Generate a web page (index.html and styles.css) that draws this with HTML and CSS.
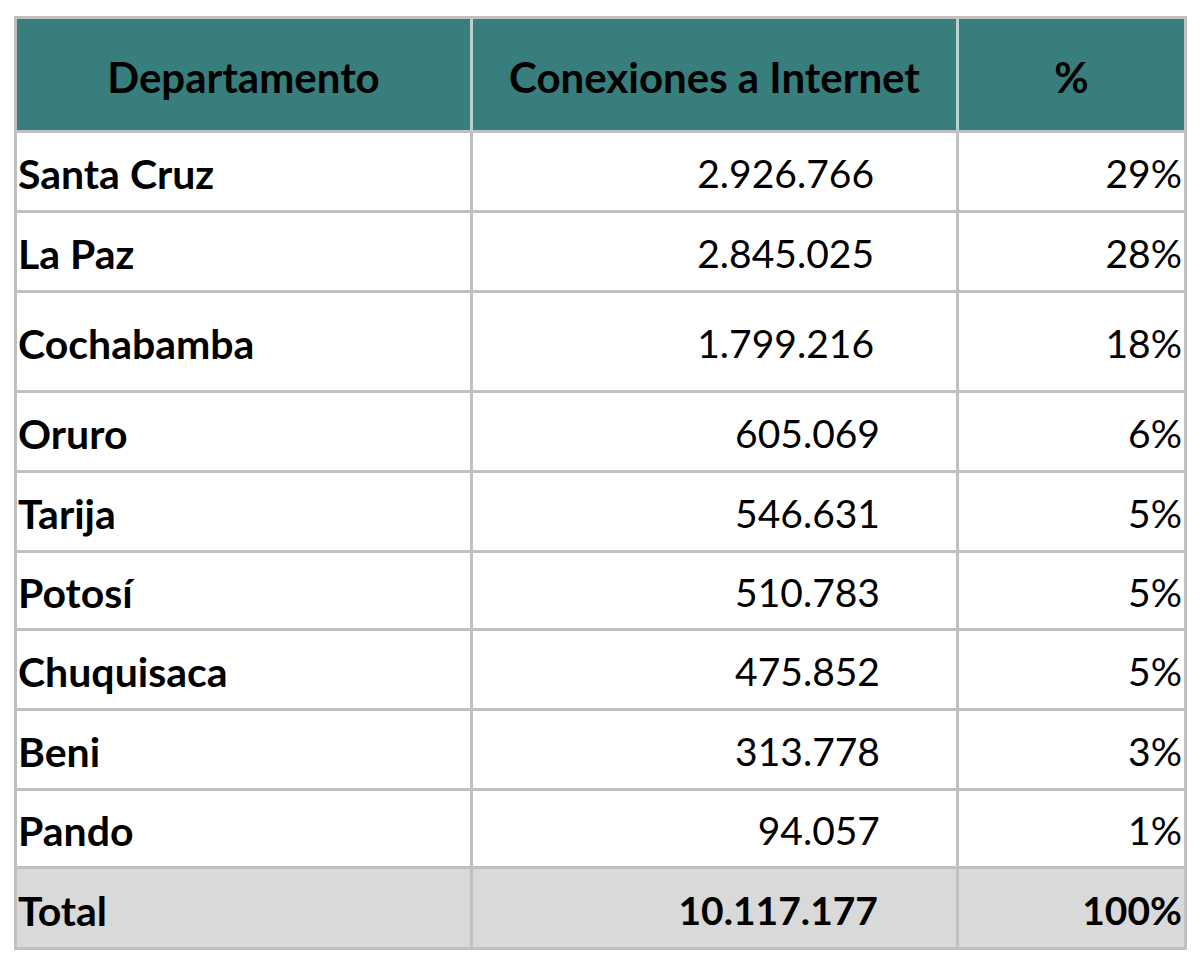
FILE: index.html
```html
<!DOCTYPE html>
<html lang="es">
<head>
<meta charset="utf-8">
<title>Conexiones a Internet por departamento</title>
<link rel="stylesheet" href="styles.css">
</head>
<body>
<div class="page">
  <table class="data">
    <thead>
      <tr class="head">
        <th class="c-dep">Departamento</th>
        <th class="c-con">Conexiones a Internet</th>
        <th class="c-pct">%</th>
      </tr>
    </thead>
    <tbody>
      <tr class="r80"><td class="dep">Santa Cruz</td><td class="num wide">2.926.766</td><td class="pct">29%</td></tr>
      <tr class="r80"><td class="dep">La Paz</td><td class="num wide">2.845.025</td><td class="pct">28%</td></tr>
      <tr class="r100"><td class="dep">Cochabamba</td><td class="num wide">1.799.216</td><td class="pct">18%</td></tr>
      <tr class="r80"><td class="dep">Oruro</td><td class="num">605.069</td><td class="pct">6%</td></tr>
      <tr class="r80"><td class="dep">Tarija</td><td class="num">546.631</td><td class="pct">5%</td></tr>
      <tr class="r78"><td class="dep">Potosí</td><td class="num">510.783</td><td class="pct">5%</td></tr>
      <tr class="r80"><td class="dep">Chuquisaca</td><td class="num">475.852</td><td class="pct">5%</td></tr>
      <tr class="r80"><td class="dep">Beni</td><td class="num">313.778</td><td class="pct">3%</td></tr>
      <tr class="r78"><td class="dep">Pando</td><td class="num">94.057</td><td class="pct">1%</td></tr>
      <tr class="total r81"><td class="dep">Total</td><td class="num tot">10.117.177</td><td class="pct">100%</td></tr>
    </tbody>
  </table>
</div>
</body>
</html>
```

FILE: styles.css
```css
* { box-sizing: border-box; }
html, body { margin: 0; padding: 0; background: #ffffff; }
body { font-family: Lato, "Open Sans", "Liberation Sans", sans-serif; color: #000; }
.page { padding: 16px 0 0 14px; }

.data {
  border-collapse: separate;
  border-spacing: 0;
  border-left: 3px solid #c0c0c0;
  border-top: 3px solid #c0c0c0;
  font-size: 39px;
  line-height: 1;
}
.data th, .data td {
  border-right: 3px solid #c0c0c0;
  border-bottom: 3px solid #c0c0c0;
  padding: 4px 0 0 0;
  vertical-align: middle;
}
.data .c-dep { width: 456px; }
.data .c-con { width: 486px; }
.data .c-pct { width: 228px; }

.data .head th {
  height: 114px;
  background: #377e7c;
  font-weight: 700;
  font-size: 42px;
  text-align: center;
  padding-top: 4px;
  border-right-color: #b9d0cf;
}
.data .head th.c-pct { border-right-color: #c0c0c0; }

.data .r80 td { height: 80px; }
.data .r78 td { height: 78px; }
.data .r81 td { height: 81px; }
.data .r100 td { height: 100px; }

.data .dep { font-weight: 700; font-size: 41px; text-align: left; padding-left: 1px; }
.data .num { text-align: right; padding-right: 76px; }
.data .num.wide { padding-right: 82px; }
.data .num.tot { padding-right: 78px; }
.data .pct { text-align: right; padding-right: 2px; }

.data .total td { background: #d9d9d9; font-weight: 700; }
```
